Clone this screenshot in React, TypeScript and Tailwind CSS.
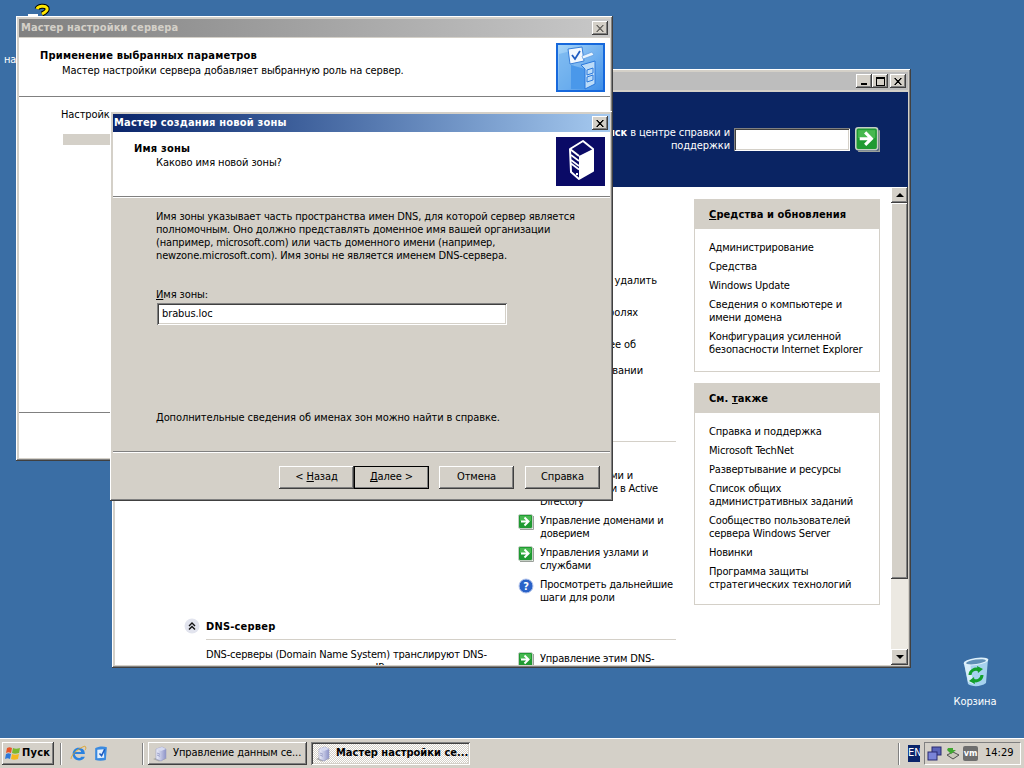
import type { ReactNode } from "react";

const raised = "shadow-[inset_-1px_-1px_0_#404040,inset_1px_1px_0_#fff,inset_-2px_-2px_0_#808080,inset_2px_2px_0_#d4d0c8]";
const sunken = "shadow-[inset_1px_1px_0_#808080,inset_-1px_-1px_0_#fff,inset_2px_2px_0_#404040,inset_-2px_-2px_0_#d4d0c8]";
const windowFrame = "absolute bg-[#d4d0c8] p-[3px] flex flex-col " + raised;
const strong = "font-bold tracking-[0.2px]";
const sideTitle = "flex h-[29px] items-center bg-[#d4d0c8] pl-[14px] pt-[2px] font-bold tracking-[0.1px]";

function GreenArrow({ size = 16 }: { size?: number }) {
  return (
    <svg width={size} height={size} viewBox="0 0 16 16" className="shrink-0">
      <rect x="0.5" y="0.5" width="14" height="14" rx="1.5" fill="#1f9a32" stroke="#c4d0c4" />
      <rect x="2" y="2" width="11" height="5" fill="#46b84f" />
      <path d="M15.5 2v13.5H2" stroke="#9aa09a" fill="none" />
      <path d="M3 7.5h7M6.5 3.5l4 4-4 4" stroke="#fff" strokeWidth="2" fill="none" />
    </svg>
  );
}

function CloseGlyph() {
  return (
    <svg width="8" height="7" viewBox="0 0 8 7">
      <path d="M0 0h2v1h1v1h2V1h1V0h2L5 3.5 8 7H6V6H5V5H3v1H2v1H0l3-3.5z" fill="#000" />
    </svg>
  );
}

function CaptionButton({ children }: { children: ReactNode }) {
  return <span className={"flex h-[14px] w-[16px] items-center justify-center bg-[#d4d0c8] " + raised}>{children}</span>;
}

function PushButton({ children, isDefault }: { children: ReactNode; isDefault?: boolean }) {
  return (
    <button className={"h-[23px] w-[75px] bg-[#d4d0c8] text-center " + raised + (isDefault ? " outline outline-1 -outline-offset-1 outline-black" : "")}>
      {children}
    </button>
  );
}

function SideLink({ children }: { children: ReactNode }) {
  return <p className="leading-[13px] tracking-[-0.17px]">{children}</p>;
}

function Divider() {
  return <div className="h-[2px] border-t border-b border-t-[#808080] border-b-white" />;
}

function ZoneIcon() {
  return (
    <svg width="49" height="49" viewBox="0 0 49 49" className="shrink-0">
      <rect width="49" height="49" fill="#0a0a66" />
      <path d="M14 12 27 4l10 8v22l-14 8-8-7z" fill="#0a0a66" stroke="#fff" strokeWidth="2" strokeLinejoin="round" />
      <path d="M23 19l14-7v22l-14 8z" fill="#fff" />
      <path d="M14 12l9 7" stroke="#fff" strokeWidth="2" />
      <path d="M15 18l8 6M15 23l8 6M15 26.5l8 6" stroke="#fff" strokeWidth="1.6" />
      <rect x="20" y="36" width="2" height="2" fill="#fff" />
    </svg>
  );
}

function RoleIcon() {
  return (
    <svg width="49" height="49" viewBox="0 0 49 49" className="shrink-0">
      <defs>
        <linearGradient id="roleBg" x1="0" y1="0" x2="1" y2="1">
          <stop offset="0" stopColor="#a8d6f8" />
          <stop offset="1" stopColor="#3f8fe8" />
        </linearGradient>
      </defs>
      <rect width="49" height="49" fill="#1668dc" />
      <rect x="2" y="2" width="45" height="45" fill="url(#roleBg)" />
      <path d="M3 11l12-3 3 13-4 25H3z" fill="#6aaeec" opacity="0.6" />
      <path d="M15 22l14 4v20H15z" fill="#4a98ea" />
      <path d="M25 22l14-4v23l-10 5v-20z" fill="#bcdcf8" stroke="#2a78dc" />
      <path d="M12 6l14-2 2 14-14 3z" fill="#f2f8fe" stroke="#3a80d8" />
      <path d="M16 12l3 4 5-8" stroke="#1e5cc0" strokeWidth="1.8" fill="none" />
      <path d="M26 13l10-4 2 3-11 4z" fill="#e8f4fe" stroke="#5a9ae0" strokeWidth="0.7" />
      <path d="M31 27l6-2v5l-6 2zM31 34l6-2v5l-6 2z" fill="none" stroke="#2a78dc" />
    </svg>
  );
}

function ServerSmall() {
  return (
    <svg width="16" height="16" viewBox="0 0 16 16" className="shrink-0">
      <defs>
        <linearGradient id="srvSide" x1="0" y1="0" x2="1" y2="0">
          <stop offset="0" stopColor="#eef0fa" />
          <stop offset="1" stopColor="#8e94c8" />
        </linearGradient>
      </defs>
      <path d="M1 13l6 2.5 8-3-7-2z" fill="#a8a8a4" />
      <path d="M4 3l6-2 4 2v9l-5 3-5-2z" fill="url(#srvSide)" stroke="#9a9ec4" strokeWidth="0.6" />
      <path d="M4 3l5 2 5-2-4-2z" fill="#d6daf0" />
      <path d="M5 7l3 1.3M5 9l3 1.3" stroke="#8288b8" strokeWidth="0.7" />
    </svg>
  );
}

export default function App() {
  return (
    <div className="flex h-[768px] w-[1024px] flex-col overflow-hidden bg-[#3a6ea5] font-['DejaVu_Sans_Condensed','DejaVu_Sans',sans-serif] text-[11px] tracking-[-0.1px] text-black">
      <div className="relative flex-1">
        {/* things peeking out on the desktop */}
        <span className="absolute left-[28px] top-[14px] h-[3px] w-[10px] bg-white" />
        <svg width="20" height="16" viewBox="0 0 20 16" className="absolute left-[33px] top-[2px]">
          <path d="M4 7c1-3 8-4 10-1 1 3-3 5-5 6" fill="none" stroke="#000" strokeWidth="5" />
          <path d="M4 7c1-3 8-4 10-1 1 3-3 5-5 6" fill="none" stroke="#ffe800" strokeWidth="3" />
        </svg>
        <span className="absolute left-[4px] top-[52px] text-white">на</span>

        <div className="absolute left-[946px] top-[656px] flex w-[58px] flex-col items-center gap-[6px] text-white">
          <svg width="32" height="33" viewBox="0 0 32 33">
            <path d="M5 7 29 3l-2 24c-5 4-14 4-18 1z" fill="#a6d2ee" />
            <path d="M9 26l-4-19 6-1 3 22z" fill="#d8eefa" />
            <ellipse cx="17" cy="5.5" rx="12.5" ry="3.5" transform="rotate(-8 17 5.5)" fill="#dff1fb" />
            <ellipse cx="17" cy="5.8" rx="10" ry="2.2" transform="rotate(-8 17 5.8)" fill="#5f8fb6" />
            <path d="M11 19a6 6 0 0 1 9-5" stroke="#12a02c" strokeWidth="3" fill="none" />
            <path d="M18 10l6 3-5 4z" fill="#12a02c" />
            <path d="M23 19a6 6 0 0 1-9 5" stroke="#12a02c" strokeWidth="3" fill="none" />
            <path d="M16 28l-6-3 5-4z" fill="#12a02c" />
          </svg>
          <span className="leading-[13px]">Корзина</span>
        </div>

        {/* Управление данным сервером */}
        <div className={windowFrame + " left-[112px] top-[69px] h-[599px] w-[799px]"}>
          <div className="flex h-[18px] items-center justify-end gap-0 bg-[#bdbdbd] pr-[2px]">
            <CaptionButton><span className="mt-[6px] h-[2px] w-[6px] bg-black" /></CaptionButton>
            <CaptionButton><span className="h-[9px] w-[9px] border border-t-2 border-black" /></CaptionButton>
            <span className="ml-[2px]"><CaptionButton><CloseGlyph /></CaptionButton></span>
          </div>
          <div className="mt-[2px] flex h-[95px] items-center justify-end gap-[4px] bg-[#0a2463] pb-[1px] pr-[28px] text-white">
            <p className="w-[130px] text-right leading-[13px]"><b>иск</b> в центре справки и поддержки</p>
            <span className={"h-[23px] w-[116px] bg-white " + sunken} />
            <span className="ml-[1px]"><GreenArrow size={25} /></span>
          </div>
          <div className="flex min-h-0 flex-1 bg-white">
            <div className="flex min-w-0 flex-1 overflow-hidden pt-[12px]">
              <div className="w-[579px] shrink-0">
                <div className="ml-[425px] mt-[75px] flex w-[136px] flex-col whitespace-nowrap leading-[13px]">
                  <p className="pr-[19px] text-right">Добавить или удалить</p>
                  <p className="mt-[19px] pr-[38px] text-right">Сведения о ролях</p>
                  <p className="mt-[19px] pr-[40px] text-right">Подробнее об</p>
                  <p className="mt-[13px] pr-[33px] text-right">использовании</p>
                </div>
                <div className="ml-[401px] mt-[64px] h-px w-[160px] bg-[#d4d0c8]" />
                <div className="ml-[403px] mt-[27px] flex w-[158px] flex-col gap-[6px] leading-[13px] tracking-[-0.2px]">
                  <div className="w-[140px] whitespace-nowrap pl-[22px]">
                    <p className="pr-[25px] text-right">Работа с ролями и</p>
                    <p className="text-right">доменами в Active</p>
                    <p>Directory</p>
                  </div>
                  <div className="flex gap-[6px]"><GreenArrow /><p>Управление доменами и<br />доверием</p></div>
                  <div className="flex gap-[6px]"><GreenArrow /><p>Управления узлами и<br />службами</p></div>
                  <div className="flex gap-[6px]">
                    <svg width="16" height="16" viewBox="0 0 16 16" className="shrink-0">
                      <circle cx="8" cy="8" r="7" fill="#2a62c8" stroke="#b8c8ec" />
                      <text x="8" y="12" textAnchor="middle" fontSize="11" fontWeight="700" fill="#fff">?</text>
                    </svg>
                    <p className="whitespace-nowrap">Просмотреть дальнейшие<br />шаги для роли</p>
                  </div>
                </div>
                <div className="ml-[69px] mt-[14px] flex items-center gap-[6px]">
                  <svg width="16" height="16" viewBox="0 0 16 16" className="shrink-0">
                    <circle cx="8" cy="8" r="7.5" fill="#e2e4ee" />
                    <path d="M5 8l3-3 3 3M5 11.5l3-3 3 3" stroke="#111" strokeWidth="1.4" fill="none" />
                  </svg>
                  <b className={"leading-[13px] " + strong}>DNS-сервер</b>
                </div>
                <div className="ml-[91px] mt-[5px] h-px w-[470px] bg-[#d4d0c8]" />
                <div className="ml-[91px] mt-[8px] flex gap-[32px] leading-[13px] tracking-[-0.2px]">
                  <p className="w-[280px] whitespace-nowrap">DNS-серверы (Domain Name System) транслируют DNS-<br />имена доменов и компьютеров в IP-адреса</p>
                  <div className="mt-[4px] flex gap-[6px]"><GreenArrow /><p className="whitespace-nowrap">Управление этим DNS-</p></div>
                </div>
              </div>
              <div className="flex w-[186px] shrink-0 flex-col gap-[11px]">
                <section className="border border-[#d4d0c8]">
                  <h3 className={sideTitle}><span><u>С</u>редства и обновления</span></h3>
                  <div className="flex flex-col gap-[6px] pb-[15px] pl-[14px] pr-[8px] pt-[12px]">
                    <SideLink>Администрирование</SideLink>
                    <SideLink>Средства</SideLink>
                    <SideLink>Windows Update</SideLink>
                    <SideLink>Сведения о компьютере и имени домена</SideLink>
                    <SideLink>Конфигурация усиленной безопасности Internet Explorer</SideLink>
                  </div>
                </section>
                <section className="border border-[#d4d0c8]">
                  <h3 className={sideTitle}><span>См. <u>т</u>акже</span></h3>
                  <div className="flex flex-col gap-[6px] pb-[13px] pl-[14px] pr-[8px] pt-[12px]">
                    <SideLink>Справка и поддержка</SideLink>
                    <SideLink>Microsoft TechNet</SideLink>
                    <SideLink>Развертывание и ресурсы</SideLink>
                    <SideLink>Список общих административных заданий</SideLink>
                    <SideLink>Сообщество пользователей сервера Windows Server</SideLink>
                    <SideLink>Новинки</SideLink>
                    <SideLink>Программа защиты стратегических технологий</SideLink>
                  </div>
                </section>
              </div>
            </div>
            <div className="flex w-[17px] shrink-0 flex-col bg-[#ece9e2]">
              <span className={"flex h-[16px] items-center justify-center bg-[#d4d0c8] " + raised}>
                <span className="h-0 w-0 border-x-[4px] border-b-[4px] border-x-transparent border-b-black" />
              </span>
              <span className={"h-[376px] bg-[#d4d0c8] " + raised} />
              <span className="flex-1" />
              <span className={"flex h-[16px] items-center justify-center bg-[#d4d0c8] " + raised}>
                <span className="h-0 w-0 border-x-[4px] border-t-[4px] border-x-transparent border-t-black" />
              </span>
            </div>
          </div>
        </div>

        {/* Мастер настройки сервера */}
        <div className={windowFrame + " left-[16px] top-[16px] h-[445px] w-[597px]"}>
          <div className="flex h-[18px] items-center justify-between bg-gradient-to-r from-[#808080] to-[#c8c8c8] px-[2px] font-bold tracking-[0.1px] text-[#d4d0c8]">
            <span className="pt-[1px]">Мастер настройки сервера</span>
            <CaptionButton><span className="opacity-50"><CloseGlyph /></span></CaptionButton>
          </div>
          <div className="mt-[1px] flex h-[58px] items-start justify-between bg-white pr-[5px]">
            <div className="pl-[21px] pt-[10px]">
              <p className={"leading-[15px] " + strong}>Применение выбранных параметров</p>
              <p className="pl-[22px] leading-[15px]">Мастер настройки сервера добавляет выбранную роль на сервер.</p>
            </div>
            <span className="mt-[5px]"><RoleIcon /></span>
          </div>
          <Divider />
          <div className="flex-1 bg-white pl-[42px] pt-[10px]">
            <p className="leading-[13px]">Настройка</p>
            <div className="ml-[2px] mt-[13px] h-[11px] w-[500px] bg-[#d4d0c8]" />
          </div>
          <Divider />
          <div className="h-[44px] bg-white" />
        </div>

        {/* Мастер создания новой зоны */}
        <div className={windowFrame + " left-[110px] top-[111px] h-[390px] w-[503px]"}>
          <div className={"flex h-[18px] items-center justify-between bg-gradient-to-r from-[#0a246a] to-[#a6caf0] pl-[1px] pr-[2px] text-white " + strong}>
            <span>Мастер создания новой зоны</span>
            <CaptionButton><CloseGlyph /></CaptionButton>
          </div>
          <div className="flex h-[64px] items-start justify-between bg-white pr-[5px]">
            <div className="pl-[21px] pt-[10px]">
              <p className={"leading-[14px] " + strong}>Имя зоны</p>
              <p className="pl-[22px] leading-[14px]">Каково имя новой зоны?</p>
            </div>
            <span className="mt-[5px]"><ZoneIcon /></span>
          </div>
          <Divider />
          <div className="flex flex-1 flex-col pl-[43px] pt-[12px]">
            <p className="w-[430px] whitespace-nowrap leading-[13px] tracking-[-0.14px]">
              Имя зоны указывает часть пространства имен DNS, для которой сервер является<br />
              полномочным. Оно должно представлять доменное имя вашей организации<br />
              (например, microsoft.com) или часть доменного имени (например,<br />
              newzone.microsoft.com). Имя зоны не является именем DNS-сервера.
            </p>
            <label className="mt-[26px] leading-[13px]"><u>И</u>мя зоны:</label>
            <div className={"ml-[1px] mt-[2px] flex h-[22px] w-[350px] items-center bg-white pl-[5px] " + sunken}>brabus.loc</div>
            <p className="mt-[86px] leading-[13px]">Дополнительные сведения об именах зон можно найти в справке.</p>
          </div>
          <Divider />
          <div className="flex h-[45px] items-start justify-end pr-[10px] pt-[13px]">
            <PushButton>&lt; <u>Н</u>азад</PushButton>
            <PushButton isDefault><u>Д</u>алее &gt;</PushButton>
            <span className="ml-[10px]"><PushButton>Отмена</PushButton></span>
            <span className="ml-[11px]"><PushButton>Справка</PushButton></span>
          </div>
        </div>
      </div>

      {/* Панель задач */}
      <div className="flex h-[30px] items-center border-t border-t-white bg-[#d4d0c8] pl-[2px] pr-[3px]">
        <button className={"flex h-[23px] w-[52px] items-center pl-[2px] " + strong + " " + raised}>
          <svg width="18" height="16" viewBox="1 0 18 16" className="shrink-0">
            <path d="M4 2c2-1 3-1 5 0L8 7C6 6 5 6 3 7z" fill="#e8562a" />
            <path d="M10 2c2 1 4 1 7 0l-1 5c-3 1-5 1-7 0z" fill="#7ab82e" />
            <path d="M3 8c2-1 3-1 5 0l-1 5c-2-1-3-1-5 0z" fill="#2e78d8" />
            <path d="M9 8c2 1 4 1 7 0l-1 5c-3 1-5 1-7 0z" fill="#f4b81e" />
          </svg>
          Пуск
        </button>
        <span className="ml-[6px] h-[22px] w-[2px] border-l border-r border-l-[#808080] border-r-white" />
        <span className="ml-[8px] flex items-center gap-[5px]">
          <svg width="17" height="17" viewBox="0 0 16 16">
            <path d="M4.5 8.5h9.5c0-4-2.5-6-6-6-3 0-5.5 2.5-5.5 6 0 4 3 6 6 6 2.5 0 4.5-1 5.5-3.5h-3.5c-.5 1-1.2 1.3-2 1.3-1.7 0-3.6-1.3-4-3.8z" fill="#2a82e0" />
            <path d="M5 6.5c.4-1.4 1.5-2 2.8-2 1.4 0 2.4.7 2.7 2z" fill="#d4d0c8" />
            <path d="M1 13C1 10 6 4 14 1c1.5 1 1 3 0 4" stroke="#e0a020" strokeWidth="0.8" fill="none" />
          </svg>
          <svg width="17" height="17" viewBox="0 0 16 16">
            <path d="M3 3c3-2 8-2 11-1l-1 12c-3 1-7 1-10 0z" fill="#3a8ae0" />
            <path d="M5 4.5l6-.5 .5 8-6.5.5z" fill="#e4f0fc" />
            <path d="M7 8l2 2 3-6" stroke="#1e5cc0" strokeWidth="1.5" fill="none" />
          </svg>
        </span>
        <span className="ml-[33px] h-[22px] w-[2px] border-l border-r border-l-[#808080] border-r-white" />
        <button className={"ml-[4px] flex h-[23px] w-[159px] items-center gap-[5px] pl-[4px] " + raised}>
          <ServerSmall /><span>Управление данным се...</span>
        </button>
        <button className={"ml-[4px] flex h-[23px] w-[159px] items-center gap-[5px] bg-[repeating-conic-gradient(#fff_0_25%,#d4d0c8_0_50%)] bg-[length:2px_2px] pl-[4px] font-bold tracking-normal " + sunken}>
          <ServerSmall /><span>Мастер настройки се...</span>
        </button>
        <span className="ml-auto h-[22px] w-[2px] border-l border-r border-l-[#808080] border-r-white" />
        <span className="ml-[8px] flex h-[17px] w-[12px] items-center overflow-hidden bg-[#0a246a] text-white">EN</span>
        <div className="ml-[4px] flex h-[23px] w-[97px] items-center gap-[2px] border border-t-[#808080] border-l-[#808080] border-r-white border-b-white pl-[2px]">
          <svg width="16" height="16" viewBox="0 0 16 16">
            <rect x="5" y="1" width="9" height="8" fill="#5a64b8" stroke="#2a2a70" />
            <rect x="1" y="6" width="9" height="8" fill="#7a84d8" stroke="#2a2a70" />
          </svg>
          <svg width="16" height="16" viewBox="0 0 16 16">
            <path d="M2 9l6-3 6 3-6 4z" fill="#c8c8b8" stroke="#505050" />
            <path d="M3 2h5v2h3l-5 4-4-4z" fill="#40a830" />
          </svg>
          <span className="flex h-[15px] w-[15px] items-center justify-center rounded-[2px] bg-[#6e6e6e] text-[9px] font-bold text-white">vm</span>
          <span className="ml-[5px] tracking-normal">14:29</span>
        </div>
      </div>
    </div>
  );
}
